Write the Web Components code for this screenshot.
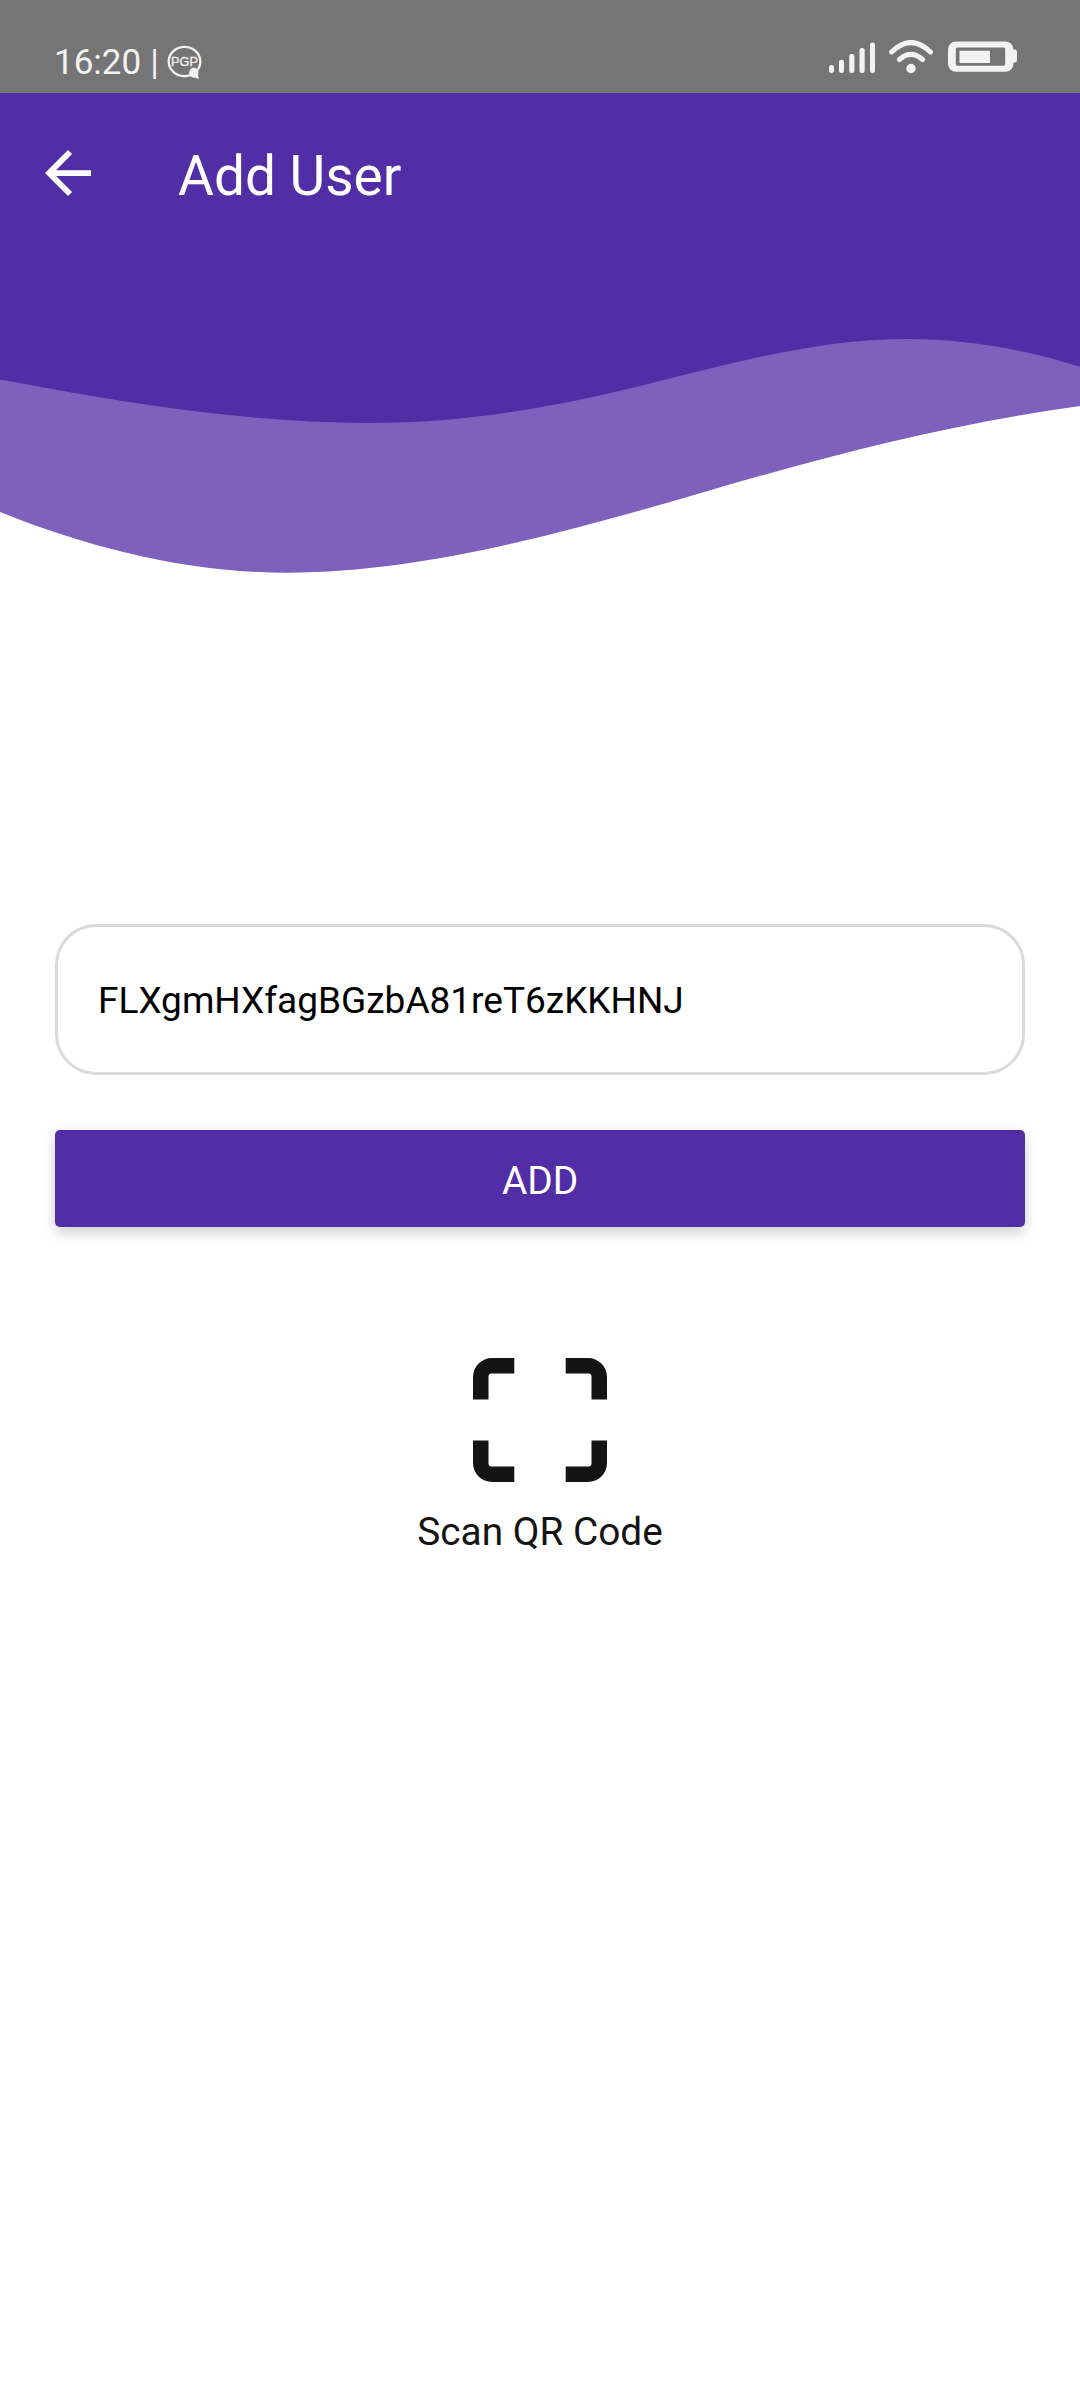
<!DOCTYPE html>
<html lang="en">
<head>
<meta charset="utf-8">
<title>Add User</title>
<style>
body{margin:0;background:#fff;font-family:Roboto,sans-serif;color:#141414}
</style>
</head>
<body>
<add-user-page></add-user-page>
<script>
function define(name, html){
  const t=document.createElement('template');
  t.innerHTML=html;
  customElements.define(name,class extends HTMLElement{
    constructor(){super();this.attachShadow({mode:'open'}).append(t.content.cloneNode(true));}
  });
}
define('pgp-badge',`<style>
:host{display:block;width:36px;height:36px}svg{display:block}
</style>
<svg width="36" height="36" viewBox="0 0 36 36"><ellipse cx="17.5" cy="16.5" rx="15.8" ry="14.6" fill="none" stroke="#f2f2f2" stroke-width="2.3"/>
<text x="17.6" y="20.8" text-anchor="middle" textLength="27" lengthAdjust="spacingAndGlyphs" font-family="Liberation Sans,sans-serif" font-size="12.6" fill="#f2f2f2" stroke="#f2f2f2" stroke-width=".3">PGP</text>
<path d="M26.5 22.5a5 5 0 0 1 4.4 7.4l1.2 4-4-1.2a5 5 0 1 1-1.6-10.2z" fill="#f2f2f2"/></svg>`);
define('status-icons',`<style>
:host{display:block}svg{display:block}
</style>
<svg width="230" height="50" viewBox="0 0 230 50" fill="#f2f2f2">
<g><rect x="19" y="25" width="5" height="8" rx="2.3"/><rect x="29" y="19.7" width="5" height="13.3" rx="2.3"/><rect x="39.2" y="14" width="5.2" height="19" rx="2.3"/><rect x="49.5" y="8" width="5.2" height="25" rx="2.3"/><rect x="60" y="2.5" width="5" height="30.5" rx="2.3"/></g>
<g fill="none" stroke="#f2f2f2" stroke-width="5.1" stroke-linecap="round"><path d="M81.6 12Q101 -6.8 120.4 12M89.5 19.5Q101 9.4 112.5 19.5"/></g><circle cx="101" cy="28.5" r="4.7"/>
<path fill-rule="evenodd" d="M146 1.5h49.5a8 8 0 0 1 8 8h1a2.5 2.5 0 0 1 2.5 2.5v8a2.5 2.5 0 0 1-2.5 2.5h-1v1.3a8 8 0 0 1-8 8H146a8 8 0 0 1-8-8v-14.3a8 8 0 0 1 8-8zM147.4 7.6q-1.6 0-1.6 1.6v14.9q0 1.6 1.6 1.6h46.2q1.6 0 1.6-1.6V9.2q0-1.6-1.6-1.6z"/><rect x="149.5" y="10.7" width="30.5" height="12.3"/></svg>`);
define('status-bar',`<style>
:host{display:flex;height:93px;background:#757575;color:#f2f2f2;box-sizing:border-box;padding:0 40px 0 54px;justify-content:space-between;align-items:flex-start}
.l{display:flex;padding-top:42px;font-size:35px;line-height:41px}
.bar{margin:0 8px 0 9px}
pgp-badge{margin-top:3px}
status-icons{margin-top:40px}
</style><div class="l"><span>16:20</span><span class="bar">|</span><pgp-badge></pgp-badge></div><status-icons></status-icons>`);
define('back-button',`<style>:host{display:block}svg{display:block}</style>
<svg width="46" height="46" viewBox="4 4 16 16" fill="#fff"><path d="M20 11H7.83l5.59-5.59L12 4l-8 8 8 8 1.41-1.41L7.83 13H20z"/></svg>`);
define('app-bar',`<style>
:host{display:flex;align-items:center;height:160px;box-sizing:border-box;padding-left:45px;background:#512da6;color:#fff}
h1{margin:6px 0 0 87px;font-size:55px;font-weight:400;line-height:64px}
</style><back-button></back-button><h1><slot></slot></h1>`);
define('wave-header',`<style>:host{display:block}svg{display:block}</style>
<svg width="1080" height="347" viewBox="0 253 1080 347">
<path fill="#7d61bc" d="M0 253V512C95 550 190 572.7 287 572.7C420 572.7 560 534 700 493.3C830 455 950 424 1080 406V253z"/>
<path fill="#512da6" d="M0 253V379.5C120 402 245 423 368 423C470 423 560 406 650 383.5C740 361 820 339 908 339C970 339 1030 351 1080 366.7V253z"/></svg>`);
define('user-field',`<style>
:host{display:flex;align-items:center;box-sizing:border-box;height:151px;border:3px solid #dadada;border-radius:41px;padding:2px 40px 0;color:#000;font-size:37px;line-height:46px}
</style><span><slot></slot></span>`);
define('add-button',`<style>
:host{display:block}
button{display:flex;align-items:center;justify-content:center;width:100%;height:97px;border:0;border-radius:5px;padding:4px 0 0;background:#512da6;color:#fff;font:400 38.8px/46px Roboto,sans-serif;box-shadow:0 5px 14px rgba(0,0,0,.2)}
</style><button><slot></slot></button>`);
define('scan-action',`<style>
:host{display:flex;flex-direction:column;align-items:center;gap:27px;font-size:38.8px;line-height:46px}
svg{display:block}
</style>
<svg width="134" height="124" viewBox="0 0 134 124" fill="#141414">
<path d="M0 41.5V19A19 19 0 0 1 19 0H41.3V15.5H18.5a3 3 0 0 0-3 3V41.5zM134 41.5V19A19 19 0 0 0 115 0H92.7V15.5H115.5a3 3 0 0 1 3 3V41.5zM0 82.5V105A19 19 0 0 0 19 124H41.3V108.5H18.5a3 3 0 0 1-3-3V82.5zM134 82.5V105A19 19 0 0 1 115 124H92.7V108.5H115.5a3 3 0 0 0 3-3V82.5z"/></svg>
<span><slot></slot></span>`);
define('add-user-page',`<style>
:host{display:flex;flex-direction:column;width:1080px;height:2400px;background:#fff}
main{display:flex;flex-direction:column;padding:324px 55px 0}
add-button{margin-top:55px}
scan-action{margin-top:131px}
</style>
<status-bar></status-bar><app-bar>Add User</app-bar><wave-header></wave-header>
<main><user-field>FLXgmHXfagBGzbA81reT6zKKHNJ</user-field><add-button>ADD</add-button><scan-action>Scan QR Code</scan-action></main>`);
</script>
</body>
</html>
